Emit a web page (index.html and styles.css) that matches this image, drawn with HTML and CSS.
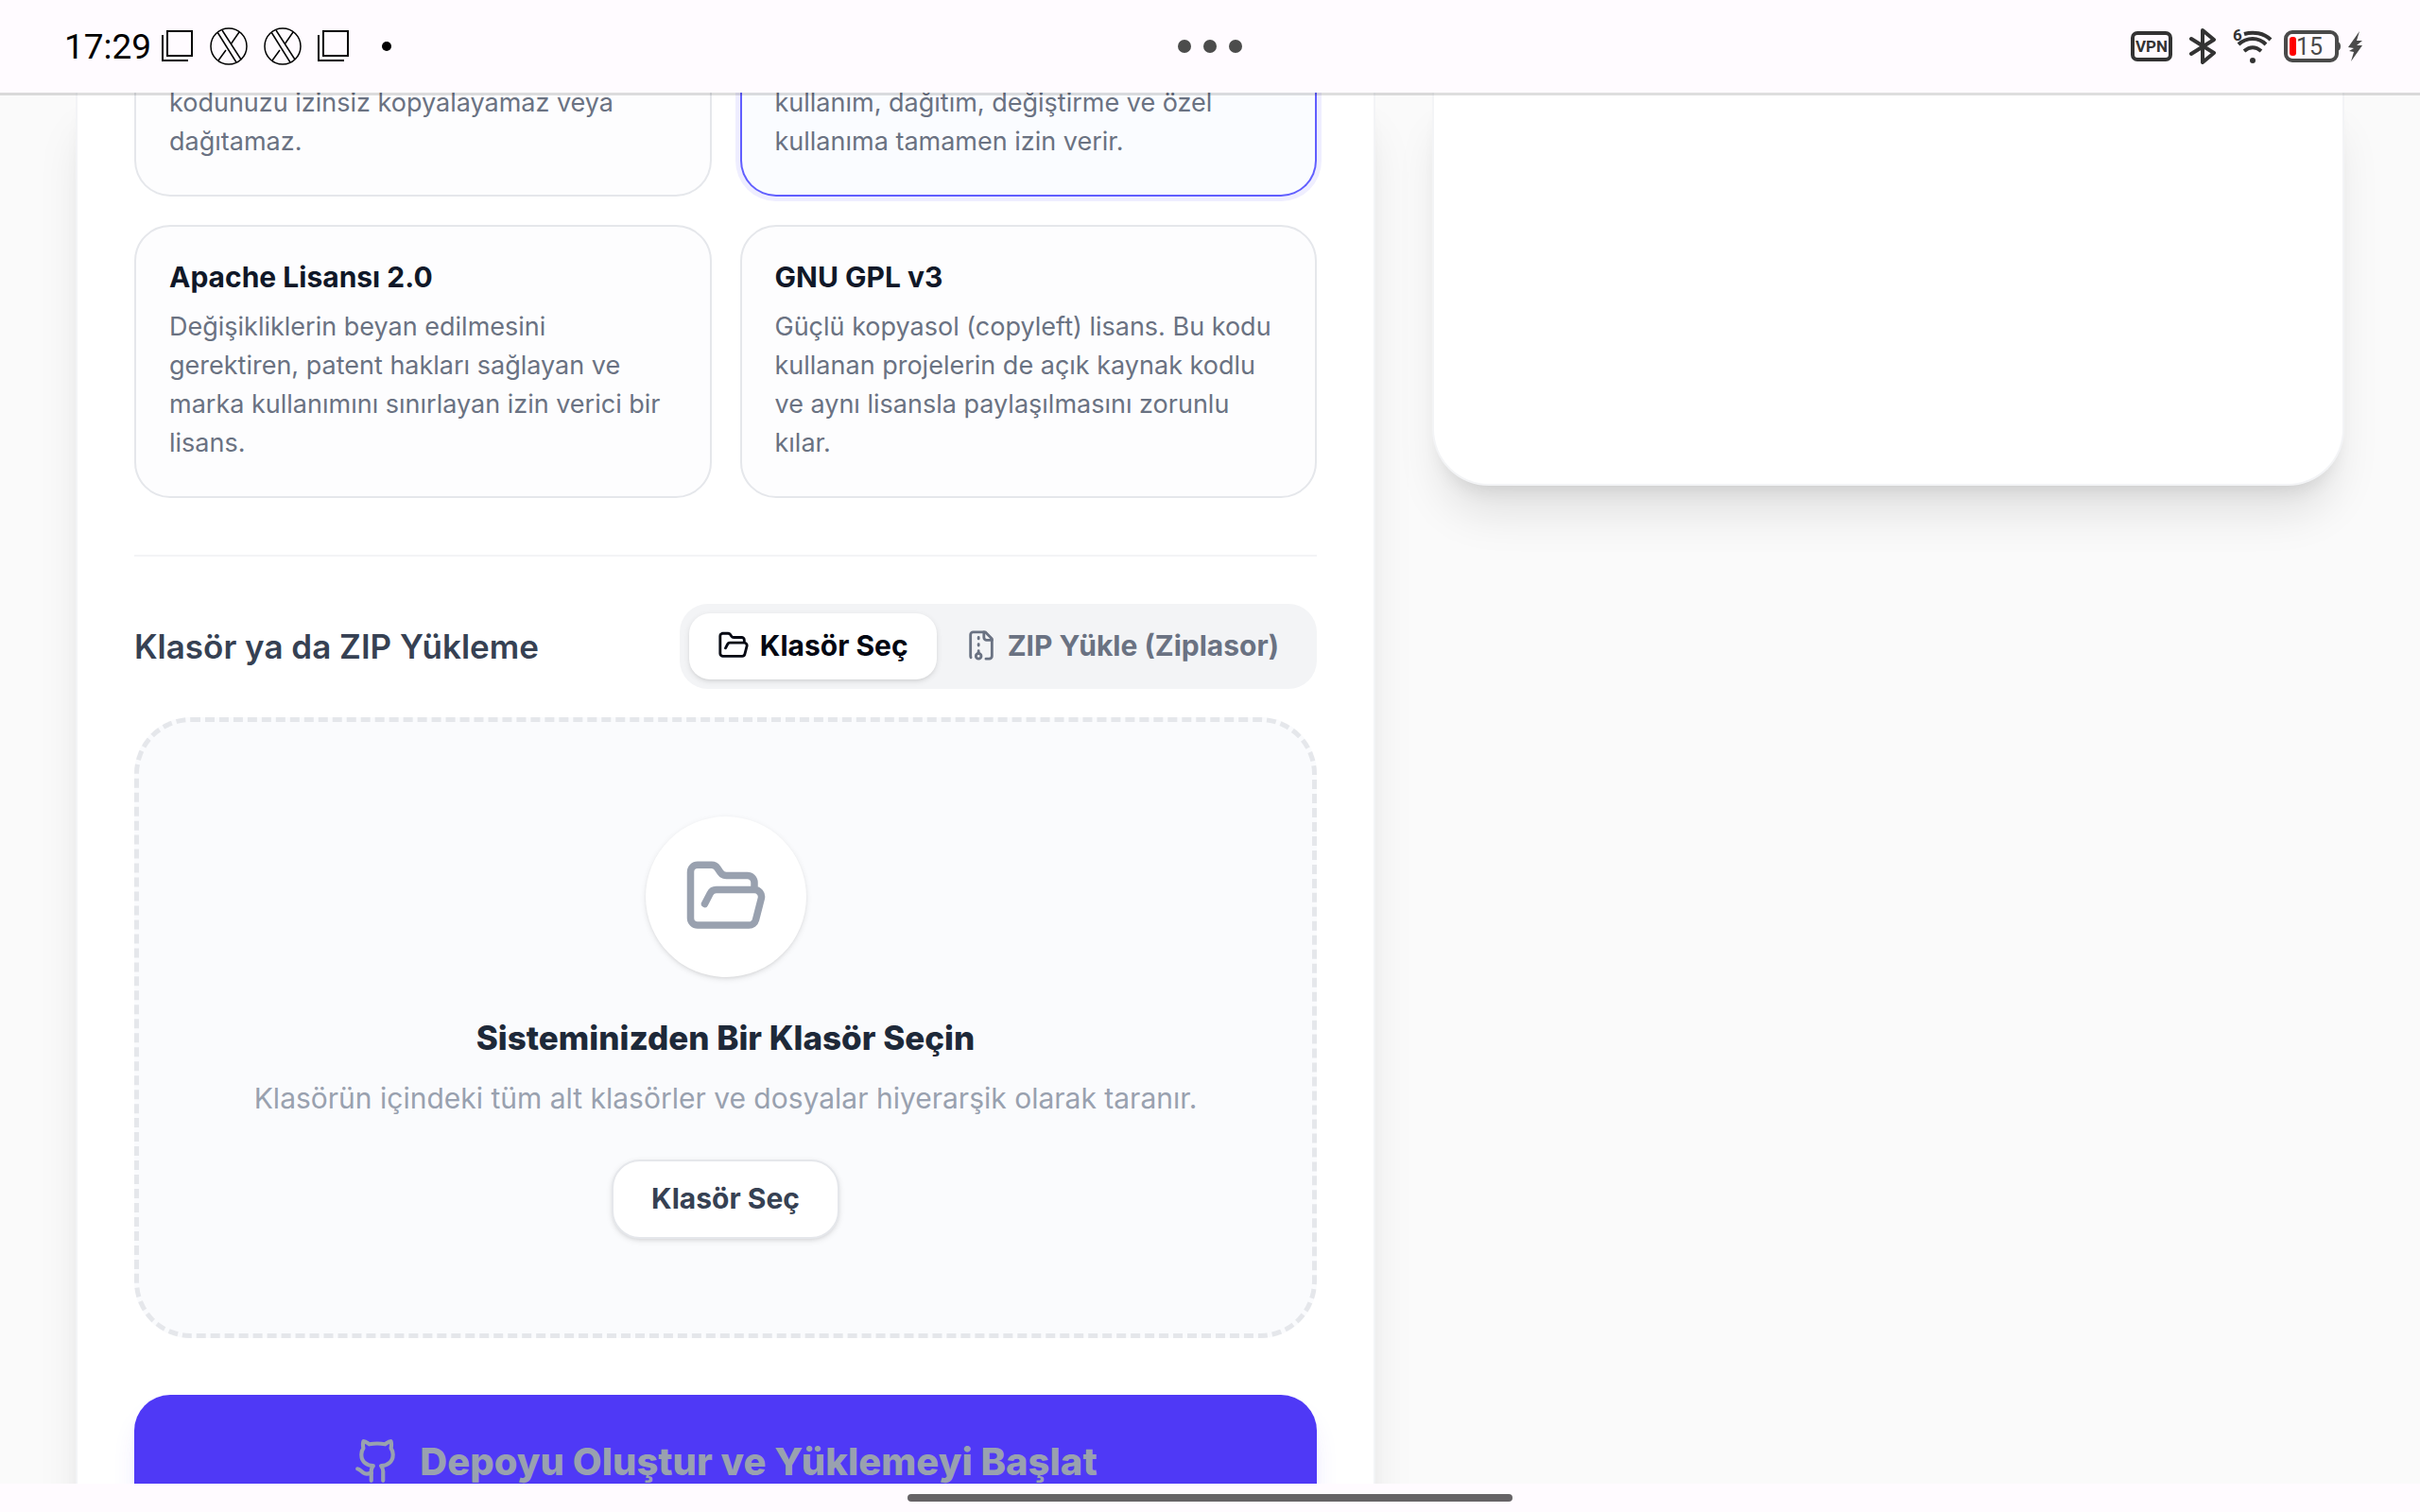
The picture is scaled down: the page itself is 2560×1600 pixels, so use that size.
FILE: index.html
```
<!DOCTYPE html>
<html lang="tr">
<head>
    <meta charset="UTF-8">
    <meta name="viewport" content="width=device-width, initial-scale=1">
    <title>Depo Oluştur</title>
    <link rel="stylesheet" href="styles.css">
</head>
<body>
    <!-- icons used more than once -->
    <svg class="sprite" aria-hidden="true">
        <symbol id="folder-open" viewBox="0 0 24 24">
            <path d="m6 14 1.5-2.9A2 2 0 0 1 9.24 10H20a2 2 0 0 1 1.94 2.5l-1.54 6a2 2 0 0 1-1.95 1.5H4a2 2 0 0 1-2-2V5a2 2 0 0 1 2-2h3.9a2 2 0 0 1 1.69.9l.81 1.2a2 2 0 0 0 1.67.9H18a2 2 0 0 1 2 2v2"/>
        </symbol>
        <symbol id="copy" viewBox="0 0 34 34">
            <path d="M6 1h26v26H6zM1 5v27h27"/>
        </symbol>
        <symbol id="x-app" viewBox="0 0 40 40">
            <circle cx="20" cy="20" r="19"/>
            <path d="M8 5 28 37M13 3 33 34M31 5 22 18M9 35 17 24"/>
        </symbol>
    </svg>

    <header class="status-bar">
        <div class="status-left">
            <span class="clock">17:29</span>
            <svg class="icon-copy"><use href="#copy"/></svg>
            <svg class="icon-x"><use href="#x-app"/></svg>
            <svg class="icon-x"><use href="#x-app"/></svg>
            <svg class="icon-copy"><use href="#copy"/></svg>
            <span class="more-dot"></span>
        </div>
        <div class="window-dots"><span></span><span></span><span></span></div>
        <div class="status-right">
            <svg width="44" height="32" viewBox="0 0 44 32">
                <rect x="2" y="2" width="40" height="28" rx="5" fill="none" stroke="#333" stroke-width="4"/>
                <text x="22" y="22" text-anchor="middle" font-size="17" class="vpn-text">VPN</text>
            </svg>
            <svg width="28" height="40" viewBox="0 0 28 40" fill="none" stroke="#333" stroke-width="4" stroke-linecap="round" stroke-linejoin="round">
                <path d="M2 12 26 27 14 37V3L26 13 2 28"/>
            </svg>
            <svg width="42" height="38" viewBox="0 0 42 38" fill="none" stroke="#333" stroke-width="4" overflow="visible">
                <path d="M12 6C22 3 33 5 40 12M6 17C15 9 27 9 35 17M12 24C18 19 24 19 30 24"/>
                <circle cx="21" cy="34" r="3" fill="#333" stroke="none"/>
                <text x="0" y="13" font-size="17" class="wifi-text">6</text>
            </svg>
            <svg width="60" height="34" viewBox="0 0 60 34">
                <rect x="2" y="2" width="54" height="30" rx="7" fill="none" stroke="#4a4a4a" stroke-width="4"/>
                <path d="M57 12q3 1 3 5t-3 5z" fill="#4a4a4a"/>
                <rect x="6" y="7" width="7" height="20" rx="3" fill="#f00"/>
                <text x="27" y="26" text-anchor="middle" font-size="25" class="battery-text">15</text>
            </svg>
            <svg width="16" height="32" viewBox="0 0 16 32" fill="#4a4a4a">
                <path d="M12 0 0 17 6 18 1 21 6 22 3 32 15 15 9 15 15 10 9 10Z"/>
            </svg>
        </div>
    </header>

    <main class="page">
        <section class="panel form-panel">
            <div class="licenses">
                <button type="button" class="license cut">
                    <span class="license-text">kodunuzu izinsiz kopyalayamaz veya dağıtamaz.</span>
                </button>
                <button type="button" class="license cut selected">
                    <span class="license-text">kullanım, dağıtım, değiştirme ve özel kullanıma tamamen izin verir.</span>
                </button>
                <button type="button" class="license">
                    <span class="license-name">Apache Lisansı 2.0</span>
                    <span class="license-text">Değişikliklerin beyan edilmesini gerektiren, patent hakları sağlayan ve marka kullanımını sınırlayan izin verici bir lisans.</span>
                </button>
                <button type="button" class="license">
                    <span class="license-name">GNU GPL v3</span>
                    <span class="license-text">Güçlü kopyasol (copyleft) lisans. Bu kodu kullanan projelerin de açık kaynak kodlu ve aynı lisansla paylaşılmasını zorunlu kılar.</span>
                </button>
            </div>

            <div class="upload">
                <div class="upload-head">
                    <h2>Klasör ya da ZIP Yükleme</h2>
                    <div class="tabs">
                        <button type="button" class="tab active">
                            <svg class="icon"><use href="#folder-open"/></svg>
                            Klasör Seç
                        </button>
                        <button type="button" class="tab">
                            <svg class="icon" viewBox="0 0 24 24">
                                <path d="M10 12v-1M10 18v-2M10 7V6M14 2v4a2 2 0 0 0 2 2h4"/>
                                <path d="M15.5 22H18a2 2 0 0 0 2-2V7l-5-5H6a2 2 0 0 0-2 2v16a2 2 0 0 0 .27 1.01"/>
                                <circle cx="10" cy="20" r="2"/>
                            </svg>
                            ZIP Yükle (Ziplasor)
                        </button>
                    </div>
                </div>

                <div class="dropzone">
                    <div class="drop-icon">
                        <svg class="icon"><use href="#folder-open"/></svg>
                    </div>
                    <h3>Sisteminizden Bir Klasör Seçin</h3>
                    <p>Klasörün içindeki tüm alt klasörler ve dosyalar hiyerarşik olarak taranır.</p>
                    <button type="button" class="pick">Klasör Seç</button>
                </div>
            </div>

            <button type="submit" class="submit">
                <svg class="icon" viewBox="0 0 24 24">
                    <path d="M15 22v-4a4.8 4.8 0 0 0-1-3.5c3 0 6-2 6-5.5.08-1.25-.27-2.48-1-3.5.28-1.15.28-2.35 0-3.5 0 0-1 0-3 1.5-2.64-.5-5.36-.5-8 0C6 2 5 2 5 2c-.3 1.15-.3 2.35 0 3.5A5.403 5.403 0 0 0 4 9c0 3.5 3 5.5 6 5.5-.39.49-.68 1.05-.85 1.65-.17.6-.22 1.23-.15 1.85v4"/>
                    <path d="M9 18c-4.51 2-5-2-7-2"/>
                </svg>
                Depoyu Oluştur ve Yüklemeyi Başlat
            </button>
        </section>

        <aside class="panel side-panel"></aside>
    </main>

    <footer class="gesture-bar"><span></span></footer>
</body>
</html>
```

FILE: styles.css
```
*{
    box-sizing: border-box;
}
body{
    margin: 0;
    height: 100vh;
    display: flex;
    flex-direction: column;
    overflow: hidden;
    background: #fafafa;
    font-family: Inter, "Noto Sans", sans-serif;
}
h2, h3, p{
    margin: 0;
}
button{
    font-family: inherit;
    border: none;
    cursor: pointer;
}
.sprite{
    display: none;
}
.icon{
    width: 34px;
    height: 34px;
    flex: none;
    fill: none;
    stroke: currentColor;
    stroke-width: 2;
    stroke-linecap: round;
    stroke-linejoin: round;
}

/* status bar */
.status-bar{
    position: relative;
    z-index: 1;
    flex: none;
    height: 98px;
    padding: 0 60px;
    display: grid;
    grid-template-columns: 1fr auto 1fr;
    align-items: center;
    background: #fffbff;
    box-shadow: 0 3px 0 rgba(0,0,0,0.13);
}
.status-left, .status-right{
    display: flex;
    align-items: center;
}
.status-left{
    gap: 17px;
    padding-left: 8px;
}
.clock{
    font-family: Roboto, sans-serif;
    font-size: 37px;
    margin-right: -6px;
}
.icon-copy, .icon-x{
    fill: none;
    stroke: #000;
    stroke-width: 2;
}
.icon-copy{
    width: 34px;
    height: 34px;
}
.icon-x{
    width: 40px;
    height: 40px;
    stroke-width: 1.5;
}
.more-dot{
    width: 10px;
    height: 10px;
    margin-left: 17px;
    border-radius: 50%;
    background: #000;
}
.window-dots{
    display: flex;
    gap: 13px;
}
.window-dots span{
    width: 14px;
    height: 14px;
    border-radius: 50%;
    background: #4c4c4c;
}
.status-right{
    justify-content: flex-end;
    gap: 18px;
}
.status-right svg:nth-child(n+4){
    margin-left: -6px;
}
.status-right svg:last-child{
    margin-left: -10px;
}
.vpn-text, .wifi-text{
    font-family: Roboto, sans-serif;
    font-weight: 700;
    fill: #333;
    stroke: none;
}
.battery-text{
    font-family: Roboto, sans-serif;
    fill: #4a4a4a;
}

/* page */
.page{
    flex: 1;
    min-height: 0;
    padding: 0 80px;
    overflow: hidden;
    display: grid;
    grid-template-columns: repeat(12, 1fr);
    column-gap: 60px;
    align-items: start;
}
.panel{
    background: #fff;
    border: 2px solid #f3f4f6;
    border-top: none;
    box-shadow: 0 38px 47px -9px rgba(0,0,0,0.1), 0 15px 19px -11px rgba(0,0,0,0.1);
}
.form-panel{
    grid-column: span 7;
    padding: 0 60px 60px;
}
.side-panel{
    grid-column: span 5;
    height: 416px;
    border-radius: 0 0 60px 60px;
}

/* licenses */
.licenses{
    display: grid;
    grid-template-columns: 1fr 1fr;
    gap: 30px;
    margin-top: -10px;
}
.license{
    display: flex;
    flex-direction: column;
    padding: 36px 35px;
    text-align: left;
    background: #fdfdfe;
    border: 2px solid #e5e7eb;
    border-radius: 38px;
}
.license.cut{
    padding-top: 0;
    border-top: none;
    border-radius: 0 0 38px 38px;
}
.license.selected{
    background: #fafcff;
    border-color: #615fff;
    box-shadow: 0 0 0 5px #efeeff;
}
.license-name{
    margin-bottom: 15px;
    font-size: 30px;
    line-height: 34px;
    font-weight: 700;
    color: #101828;
}
.license-text{
    font-size: 27px;
    line-height: 41px;
    color: #6a7282;
}

/* upload */
.upload{
    margin: 60px 0;
    padding-top: 50px;
    border-top: 2px solid #f3f4f6;
}
.upload-head{
    display: flex;
    align-items: center;
    justify-content: space-between;
    margin-bottom: 30px;
}
.upload-head h2{
    font-size: 35px;
    font-weight: 600;
    color: #364153;
}
.tabs{
    display: flex;
    padding: 10px;
    background: #f3f4f6;
    border-radius: 30px;
}
.tab{
    display: flex;
    align-items: center;
    gap: 11px;
    height: 70px;
    padding: 0 30px 2px;
    background: none;
    border-radius: 22px;
    font-size: 30px;
    font-weight: 700;
    color: #6a7282;
}
.tab.active{
    background: #fff;
    color: #030712;
    box-shadow: 0 2px 6px rgba(0,0,0,0.1), 0 2px 4px -2px rgba(0,0,0,0.1);
}
.dropzone{
    display: flex;
    flex-direction: column;
    align-items: center;
    padding: 100px 60px;
    text-align: center;
    background: #fafbfd;
    border: 5px dashed #e5e7eb;
    border-radius: 60px;
}
.drop-icon{
    padding: 40px;
    margin-bottom: 38px;
    border-radius: 50%;
    background: #fff;
    color: #99a1af;
    box-shadow: 0 2px 6px rgba(0,0,0,0.1), 0 2px 4px -2px rgba(0,0,0,0.1);
}
.drop-icon .icon{
    display: block;
    width: 90px;
    height: 90px;
}
.dropzone h3{
    margin-bottom: 16px;
    font-size: 35px;
    line-height: 52px;
    font-weight: 800;
    color: #1e2939;
}
.dropzone p{
    margin-bottom: 42px;
    font-size: 30px;
    line-height: 45px;
    color: #99a1af;
}
.pick{
    height: 84px;
    padding: 0 40px 2px;
    background: #fff;
    border: 2px solid #e5e7eb;
    border-radius: 30px;
    font-size: 30px;
    font-weight: 700;
    color: #364153;
    box-shadow: 0 2px 6px rgba(0,0,0,0.1), 0 2px 4px -2px rgba(0,0,0,0.1);
}
.submit{
    width: 100%;
    height: 140px;
    display: flex;
    align-items: center;
    justify-content: center;
    gap: 20px;
    background: #4f39f6;
    border-radius: 38px;
    font-size: 40px;
    font-weight: 800;
    color: #99a1af;
    box-shadow: 0 19px 28px -6px rgba(79,57,246,0.15);
}
.submit .icon{
    width: 50px;
    height: 50px;
}

/* gesture bar */
.gesture-bar{
    position: relative;
    z-index: 1;
    flex: none;
    height: 30px;
    display: flex;
    align-items: center;
    justify-content: center;
    background: #fffbff;
}
.gesture-bar span{
    width: 25%;
    height: 8px;
    border-radius: 4px;
    background: #666366;
}
```
